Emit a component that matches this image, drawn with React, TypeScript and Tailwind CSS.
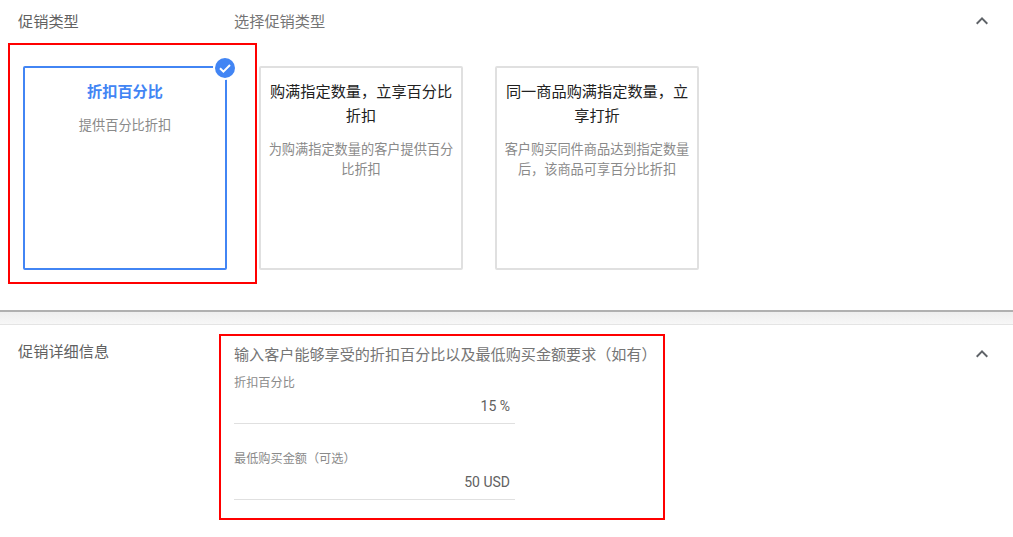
import React from "react";

const font = { fontFamily: '"Noto Sans CJK SC", sans-serif' };

function Chevron() {
  return (
    <svg width="24" height="24" viewBox="0 0 24 24" className="shrink-0">
      <path d="M7.41 15.41 12 10.83l4.59 4.58L18 14l-6-6-6 6z" fill="#5f6368" />
    </svg>
  );
}

function Card({ title, desc, selected }: { title: string; desc: string; selected?: boolean }) {
  return (
    <div
      className={
        "relative w-[204px] h-[204px] rounded-[2px] border-2 px-[7px] pt-[10px] text-center " +
        (selected ? "border-[#4285f4]" : "border-[#e0e0e0]")
      }
    >
      <div
        className={
          "text-[15.2px] leading-6 " + (selected ? "font-bold text-[#4285f4]" : "text-[#212121]")
        }
      >
        {title}
      </div>
      <div className="mt-[13px] text-[13.2px] leading-5 text-[#8a8a8a]">{desc}</div>
      {selected && (
        <div className="absolute -right-[12px] -top-[12px] w-6 h-6 rounded-full bg-white flex items-center justify-center">
          <svg width="22" height="22" viewBox="0 0 22 22">
            <circle cx="11" cy="11" r="10" fill="#4285f4" />
            <path d="M6 11.2l3.4 3.4L16 8" fill="none" stroke="#fff" strokeWidth="2" />
          </svg>
        </div>
      )}
    </div>
  );
}

function Field({ label, value }: { label: string; value: string }) {
  return (
    <div className="w-[281px] h-[50px] border-b border-[#e0e0e0]">
      <div className="text-[12.16px] leading-4 text-[#8a8a8a]">{label}</div>
      <div
        className="mt-2 pr-[5px] text-right text-[14px] leading-4 text-[#616161]"
        style={{ fontFamily: 'Roboto, "Noto Sans CJK SC", sans-serif' }}
      >
        {value}
      </div>
    </div>
  );
}

export default function App() {
  return (
    <div className="relative w-[1013px] h-[537px] overflow-hidden bg-white" style={font}>
      <section className="h-[312px] border-b-2 border-[#b0b0b0]">
        <div className="flex items-start h-[42px] pt-[9px] pl-[18px] pr-[19px]">
          <div className="w-[216px] text-[15.2px] leading-[22px] text-[#616161]">促销类型</div>
          <div className="flex-1 text-[15.2px] leading-[22px] text-[#757575]">选择促销类型</div>
          <Chevron />
        </div>
        <div className="flex gap-8 pl-[23px] pt-[24px]">
          <Card selected title="折扣百分比" desc="提供百分比折扣" />
          <Card title="购满指定数量，立享百分比折扣" desc="为购满指定数量的客户提供百分比折扣" />
          <Card title="同一商品购满指定数量，立享打折" desc="客户购买同件商品达到指定数量后，该商品可享百分比折扣" />
        </div>
      </section>

      <div className="h-[13px] bg-gradient-to-b from-[#eeeeee] to-[#f7f7f7] border-b border-[#e4e4e4]" />

      <section className="flex pl-[18px] pr-[19px] pt-[13px]">
        <div className="w-[216px] text-[15.2px] leading-6 text-[#616161]">促销详细信息</div>
        <div className="flex-1">
          <div className="mt-[3px] text-[15.1px] leading-6 text-[#757575]">
            输入客户能够享受的折扣百分比以及最低购买金额要求（如有）
          </div>
          <div className="mt-[9px] flex flex-col gap-[26px]">
            <Field label="折扣百分比" value="15 %" />
            <Field label="最低购买金额（可选）" value="50 USD" />
          </div>
        </div>
        <div className="mt-[4px]">
          <Chevron />
        </div>
      </section>

      {/* red annotation frames over the page */}
      <div className="absolute left-[8px] top-[43px] w-[249px] h-[241px] border-2 border-[#ff0000] pointer-events-none" />
      <div className="absolute left-[219px] top-[334px] w-[446px] h-[186px] border-2 border-[#ff0000] pointer-events-none" />
    </div>
  );
}
